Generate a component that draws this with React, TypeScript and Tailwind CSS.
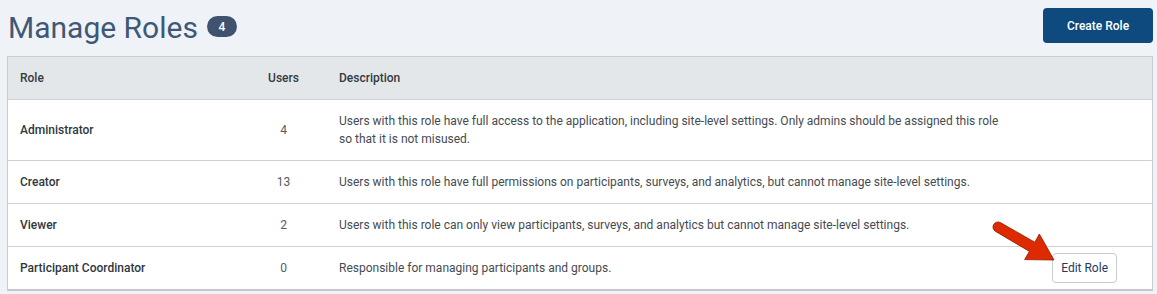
import React from 'react';

interface Role {
  name: string;
  users: number;
  description: string;
}

const roles: Role[] = [
  {
    name: 'Administrator',
    users: 4,
    description:
      'Users with this role have full access to the application, including site-level settings. Only admins should be assigned this role so that it is not misused.',
  },
  {
    name: 'Creator',
    users: 13,
    description:
      'Users with this role have full permissions on participants, surveys, and analytics, but cannot manage site-level settings.',
  },
  {
    name: 'Viewer',
    users: 2,
    description:
      'Users with this role can only view participants, surveys, and analytics but cannot manage site-level settings.',
  },
  {
    name: 'Participant Coordinator',
    users: 0,
    description: 'Responsible for managing participants and groups.',
  },
];

const cols = 'grid grid-cols-[232px_87px_690px_1fr]';

const Arrow = () => (
  <svg
    className="absolute left-[988px] top-[218px] pointer-events-none"
    width="72"
    height="50"
    viewBox="0 0 72 50"
  >
    <path
      d="M12.4 4.6 L46.8 24.2 L51.4 16 L66 42 L36.6 41.6 L41.4 33.4 L7.6 13.4 A5 5 0 0 1 12.4 4.6 Z"
      fill="#dd2a00"
      stroke="#8a1a00"
      strokeWidth="0.8"
      strokeLinejoin="round"
    />
  </svg>
);

export default function App() {
  return (
    <div className="relative min-h-[294px] bg-[#eff3f7] pl-[7px] pr-[4px] font-['Roboto',sans-serif]">
      <div className="flex h-[56px] items-start justify-between pt-2">
        <div className="flex items-start">
          <h1 className="pl-px text-[30px] leading-[40px] font-normal text-[#3e5876]">Manage Roles</h1>
          <span className="ml-[9px] mt-2 flex h-[21px] w-[30px] items-center justify-center rounded-full bg-[#3f526e] text-[12px] font-medium text-white">
            4
          </span>
        </div>
        <button className="h-[35px] w-[110px] rounded-[4px] bg-[#0e4a7e] text-[12px] font-medium text-white">
          Create Role
        </button>
      </div>

      <div className="border border-[#c9cdd1] border-b-2 border-b-[#c4c7ca] bg-white">
        <div className={`${cols} h-[42px] items-center bg-[#e4e7ea] text-[12px] font-medium text-[#343a40]`}>
          <div className="px-3">Role</div>
          <div className="text-center">Users</div>
          <div className="px-3">Description</div>
          <div />
        </div>
        {roles.map((role) => (
          <div key={role.name} className={`${cols} items-center border-t border-[#ced2d6] py-3 text-[12px] leading-[18px]`}>
            <div className="px-3 font-medium text-[#2f3740]">{role.name}</div>
            <div className="text-center text-[#555b61]">{role.users}</div>
            <div className="px-3 text-[#454b52]">{role.description}</div>
            <div className="flex justify-end pr-[35px]">
              {role.name === 'Participant Coordinator' && (
                <button className="-my-[6px] h-[30px] rounded-[4px] border border-[#c8cbcf] bg-white px-[8px] text-[12px] text-[#1f3a61]">
                  Edit Role
                </button>
              )}
            </div>
          </div>
        ))}
      </div>
      <Arrow />
    </div>
  );
}
